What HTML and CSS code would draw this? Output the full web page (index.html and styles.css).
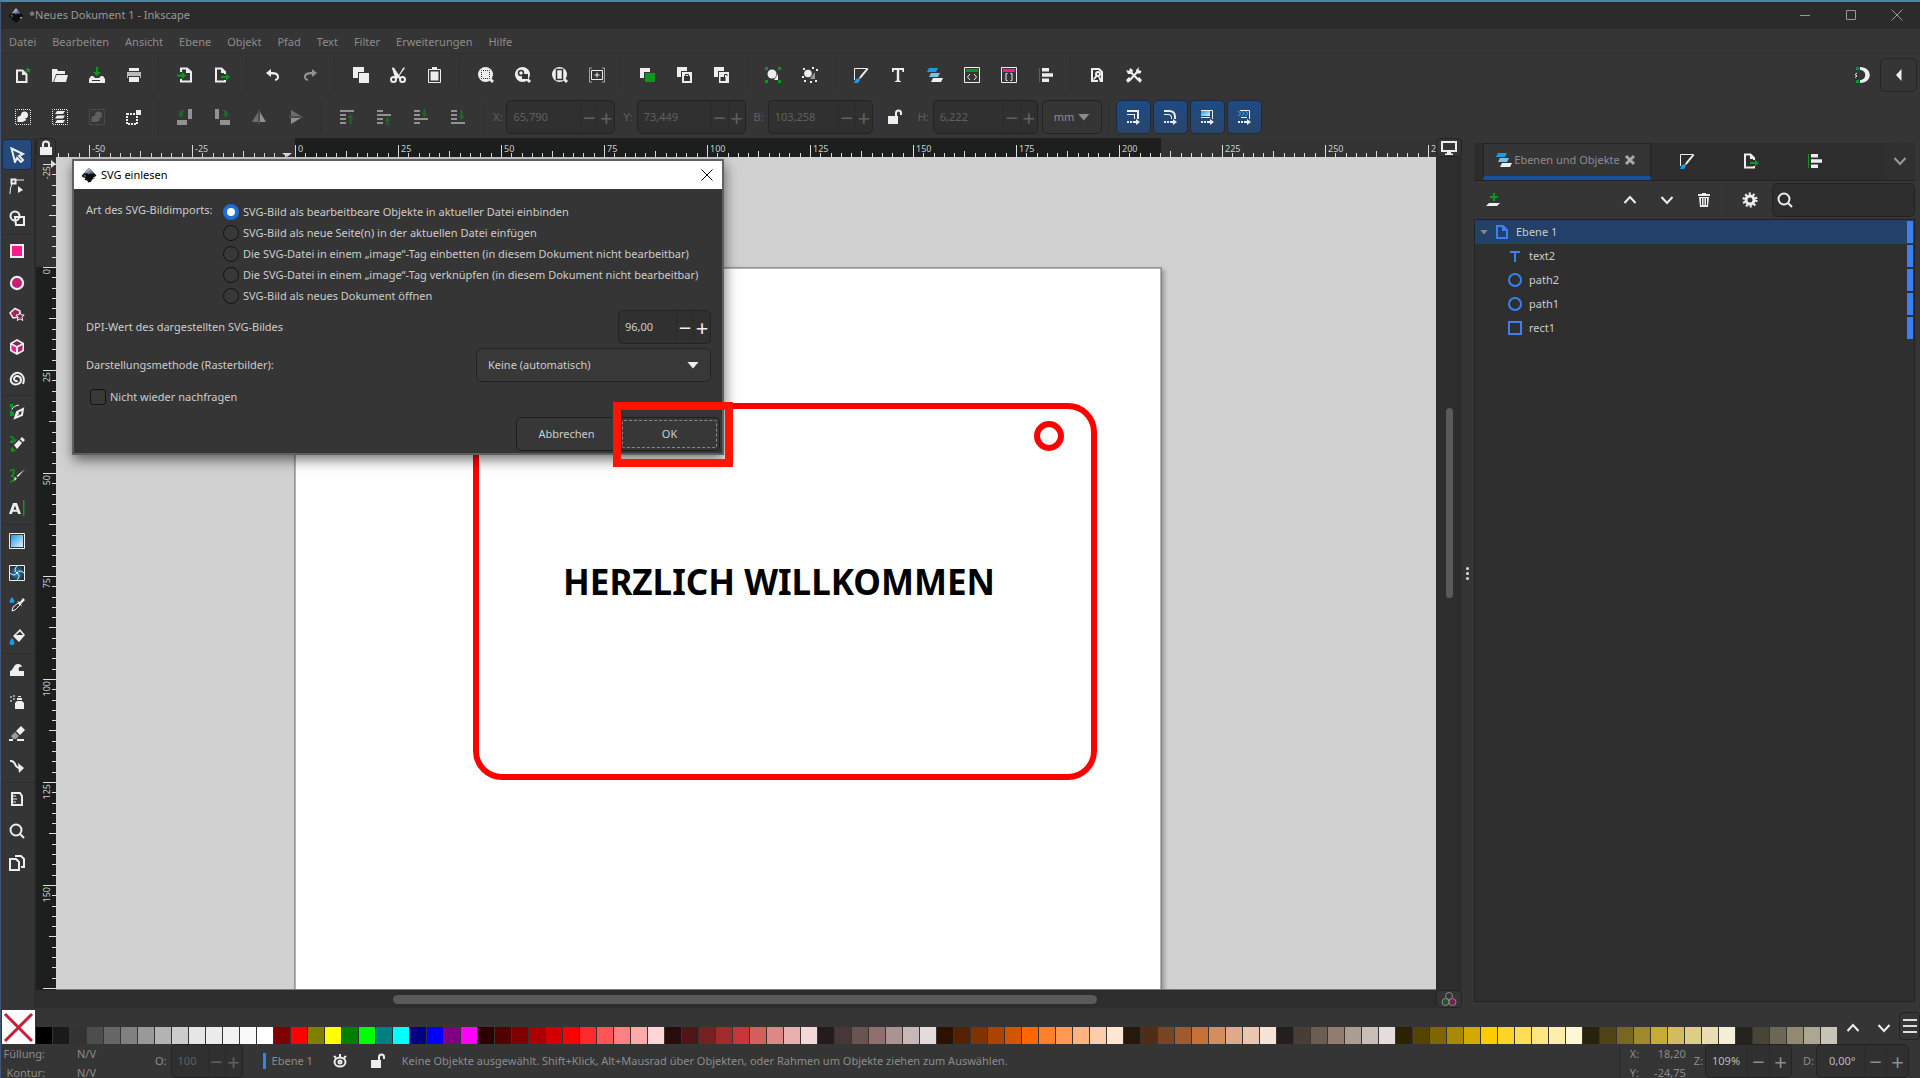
FILE: index.html
```html
<!DOCTYPE html>
<html lang="de">
<head>
<meta charset="utf-8">
<title>*Neues Dokument 1 - Inkscape</title>
<link rel="stylesheet" href="styles.css">
</head>
<body>
<svg class="sprite" aria-hidden="true">
  <defs>
    <linearGradient id="sky" x1="0" y1="0" x2="1" y2="1"><stop offset="0" stop-color="#1a9be6"/><stop offset="1" stop-color="#e4f3fb"/></linearGradient>
    <radialGradient id="glow"><stop offset="0" stop-color="#1a9be6"/><stop offset="1" stop-color="#2c3236"/></radialGradient>
    <linearGradient id="peak" x1="0" y1="0" x2="1" y2="1"><stop offset="0" stop-color="#fff"/><stop offset=".5" stop-color="#8797ad"/><stop offset="1" stop-color="#1c2b45"/></linearGradient>
  </defs>
  <symbol id="logo" viewBox="0 0 16 16"><path fill="#0d0d10" d="M8 1l7 7c1 1.200-1 1.800-2.500 2l1 1.500-2 .8L9.500 15l-2 .6L6 13.500l-2.500-.8 1-1.700C2 10.300 0 9.500 1.200 8z"/><path fill="url(#peak)" d="M8 1l5 5.500-2 .7-1.500-1L8 7.500 6 6 3 7z"/><path fill="#9aa4b4" d="M2 8.500h2.500l1 .7-2 .3zM12 10h2v1.500h-2z"/></symbol>
  <symbol id="new" viewBox="0 0 16 16"><path class="l2" d="M2 3.500h5.500l4 4V15H2z"/><path class="f" d="M7 4v4h5z"/><path class="g" d="M13 0l.9 2H16l-1.500 1.500.7 2.200L13 4.500l-2.200 1.200.7-2.200L10 2h2.100z"/></symbol>
  <symbol id="open" viewBox="0 0 16 16"><path class="f" d="M0 2h5l1 2h7v3H4l-2 6-1 2H0zM4.500 8H16l-2 7H2z"/></symbol>
  <symbol id="save" viewBox="0 0 16 16"><path class="g" d="M7 0h2v5h3L8 9 4 5h3z"/><path class="f" d="M2 9h2l2 2h4l2-2h2l2 3v4H0v-4z"/><path class="d" d="M3 13h8v1H3z"/></symbol>
  <symbol id="print" viewBox="0 0 16 16"><path class="f" d="M3 1h10v3H3zM3 10h10v5H3z"/><path fill="#bbb" d="M1 5h14v6h-1V9H2v2H1z"/></symbol>
  <symbol id="import" viewBox="0 0 16 16"><path class="l2" d="M4 5V1.500h6l4 3.500v9.500H4V12"/><path class="f" d="M9 1v5h5z"/><path class="g" d="M0 7.500h5V5l4 3.500L5 12V9.500H0z"/></symbol>
  <symbol id="export" viewBox="0 0 16 16"><path class="l2" d="M11 7V5L7.500 1.500H2v13h9V13"/><path class="f" d="M7 1v5h5z"/><path class="g" d="M7 9h5V6.500l4 3.500-4 3.500V11H7z"/></symbol>
  <symbol id="undo" viewBox="0 0 16 16"><path class="f" d="M1 6l5-4v3c5 0 8 1 8 5 0 2-1 3-4 4v-2c2-.5 2-1 2-2 0-2-2-2.700-6-2.700V10z"/></symbol>
  <symbol id="copy" viewBox="0 0 16 16"><path class="f" d="M0 0h11v5H5v6H0zM6 6h10v10H6z"/></symbol>
  <symbol id="cut" viewBox="0 0 16 16"><path class="f" d="M2 1c1-1 2 0 2 0l4.500 7.500L13 1s1-1 2 0L7 12l-2-1z"/><path class="f" d="M2 1l7 11 2-1L4 1z"/><circle class="l2" cx="3.500" cy="12.500" r="2.500"/><circle class="l2" cx="12.500" cy="12.500" r="2.500"/></symbol>
  <symbol id="paste" viewBox="0 0 16 16"><path class="l" d="M1.500 2.500h12v13h-12z"/><path class="f" d="M3.500 4.500h8v9h-8zM5 0h5v3H5z"/></symbol>
  <symbol id="zoomsel" viewBox="0 0 16 16"><circle class="f" cx="7.500" cy="7.500" r="7.500"/><path class="f" d="M11 13l2-2 3 3-2 2z"/><path d="M3.500 3.500h8v8h-8z" fill="none" stroke="#333" stroke-dasharray="1 1" stroke-dashoffset=".5"/></symbol>
  <symbol id="zoomdraw" viewBox="0 0 16 16"><circle class="f" cx="7.500" cy="7.500" r="7.500"/><path class="f" d="M11 13l2-2 3 3-2 2z"/><circle cx="6" cy="6" r="2.500" fill="none" stroke="#333" stroke-width="1.500"/><path class="d" d="M7 7h6v5H7z"/></symbol>
  <symbol id="zoompage" viewBox="0 0 16 16"><circle class="f" cx="7.500" cy="7.500" r="7.500"/><path class="f" d="M11 13l2-2 3 3-2 2z"/><path d="M4.500 2.500h6v10h-6z" fill="none" stroke="#333" stroke-width="1.500"/></symbol>
  <symbol id="zoomcenter" viewBox="0 0 16 16"><path class="l" d="M2.500 3.500h11v9h-11zM8 5.500v5M5.500 8h5"/><path class="l" opacity=".6" d="M3 1H.5v14H3M13 1h2.500v14H13"/></symbol>
  <symbol id="dup" viewBox="0 0 16 16"><path class="f" d="M0 1h10v4H4v6H0z"/><path class="g" d="M5 6h10v9H5z"/></symbol>
  <symbol id="clone" viewBox="0 0 16 16"><path class="f" d="M0 0h10v4H4v6H0zM5 5h10v11H5z"/><path class="d" d="M7 9h6v5H7z"/><path d="M8.500 9V7.500h3V9" fill="none" stroke="#333"/></symbol>
  <symbol id="unclone" viewBox="0 0 16 16"><path class="f" d="M0 0h10v4H4v6H0zM5 5h10v11H5z"/><path class="d" d="M6.500 10h5v4h-5z"/><path d="M10.500 10V7.500h2.500V9" fill="none" stroke="#333"/></symbol>
  <symbol id="group" viewBox="0 0 16 16"><circle class="f" cx="7" cy="7" r="4.500"/><path class="f" d="M9 13l4-6v6z"/><path class="g" d="M0 0h3v3H0zM13 0h3v3h-3zM0 13h3v3H0zM13 13h3v3h-3z"/></symbol>
  <symbol id="ungroup" viewBox="0 0 16 16"><circle class="f" cx="6" cy="6.500" r="3.800"/><path class="h" d="M8 12l5-7v7z"/><path class="f" d="M1 1h2v2H1zM10 0h2v2h-2zM14 2h2v2h-2zM0 9h2v2H0zM2 13h2v2H2zM8 14h2v2H8zM13 13h2v2h-2z"/></symbol>
  <symbol id="fill" viewBox="0 0 16 16"><path class="l" d="M1.500 13V1.500H14"/><path class="f" d="M15.500 2L9 10l-2 2-1-1 2-3 6-7z"/><path class="b" d="M1 16l2-4 3-1 1 2-2 3z"/></symbol>
  <symbol id="tee" viewBox="0 0 16 16"><path class="f" d="M2 1h12v4h-1.500L12 3H9.200v10.500l1.800.7V15H5v-.8l1.800-.7V3H4l-.5 2H2z"/></symbol>
  <symbol id="layers" viewBox="0 0 16 16"><path class="b" d="M2 1h9l-2 4H0z"/><path fill="#79bfe8" d="M4 6h9l-2 4H2z"/><path class="f" d="M6 11h10l-2 4H4z"/></symbol>
  <symbol id="xml" viewBox="0 0 16 16"><path class="l" d="M.5.500h15v15H.5zM6 7L3.500 10 6 13M10 7l2.500 3L10 13"/><path class="g" d="M2 2h12v3H2z"/></symbol>
  <symbol id="css" viewBox="0 0 16 16"><path class="l" d="M.5.500h15v15H.5zM6.500 6.500H5v7h1.500M9.500 6.500H11v7H9.500"/><path class="p" d="M2 2h12v3H2z"/></symbol>
  <symbol id="align" viewBox="0 0 16 16"><path class="g" d="M1 1h1v14H1z"/><path class="f" d="M4 1h7v3.500H4zM4 6.200h11v3.500H4zM4 11.500h7V15H4z"/></symbol>
  <symbol id="docprops" viewBox="0 0 16 16"><path class="l2" d="M9 14H3V2h7l3 3v9h-2"/><circle class="l2" cx="9" cy="7" r="2"/><path class="f" d="M4 12l3-4 2 1-4 4zM9 9l2 1 3 5h-3z"/></symbol>
  <symbol id="prefs" viewBox="0 0 16 16"><path class="l2" d="M3 14L12.500 3.500M3.500 4l9.500 9.500"/><path class="f" d="M0 3l3 1 1-3 3 2-1 4-4 0zM10 3l3-3-.5 3 3 1-1 2.500-4 0zM0 13l3-3 2 2-3 4zM11 12l2-2 3 3-2 3z"/></symbol>
  <symbol id="snap" viewBox="0 0 16 16"><path class="f" d="M6 0c13 0 13 16 0 16v-3c7 0 7-10 0-10z"/><path class="g" d="M2 0h3v3H2zM2 13h3v3H2z"/><path class="l" d="M3 6L1 7.500 3 9 1 10.500"/></symbol>
  <symbol id="left" viewBox="0 0 16 16"><path class="f" d="M10.500 2v12L5 8z"/></symbol>
  <symbol id="selall" viewBox="0 0 16 16"><path class="l dot" d="M.5.500h15v15H.5z"/><circle class="f" cx="9.500" cy="6" r="3.500"/><path class="f" d="M2.500 13V8l4-2 5 5-4 2z"/></symbol>
  <symbol id="sellayers" viewBox="0 0 16 16"><path class="l dot" d="M.5.500h15v15H.5z"/><path class="f" d="M5 2h8l-2 3H3zM5 6.500h8l-2 3H3zM5 11h8l-2 3H3z"/></symbol>
  <symbol id="deselect" viewBox="0 0 16 16"><path class="l dot2" d="M1 5h10v10H1z"/><path class="f" d="M10 1h5v5h-5z"/></symbol>
  <symbol id="rotl" viewBox="0 0 16 16"><path class="g" d="M1 5l3 4 3-4H5.500c0-2 1-3 2.500-4C4 0 2.500 2 2.500 5z"/><path class="f" d="M11 0h4v10h-4zM0 11h10v5H0z"/></symbol>
  <symbol id="rotr" viewBox="0 0 16 16"><path class="g" d="M9 5l3 4 3-4h-1.500c0-3-2-5-6-4 2 0 3 2 3 4z"/><path class="f" d="M1 0h4v10H1zM6 11h10v5H6z"/></symbol>
  <symbol id="fliph" viewBox="0 0 16 16"><path class="f" opacity=".6" d="M7 3v10H1z"/><path class="f" d="M9 3v10h6z"/><path class="l dot" d="M8 1v14"/></symbol>
  <symbol id="flipv" viewBox="0 0 16 16"><path class="f" opacity=".6" d="M3 1v6h10z"/><path class="f" d="M3 15V9h10z"/><path class="l dot" d="M1 8h14"/></symbol>
  <symbol id="top" viewBox="0 0 16 16"><path class="f" d="M1 1h14v2H1zM1 5h6v2H1zM1 9h6v2H1zM1 13h6v2H1z"/><path class="g" d="M10.500 15V9H8.500L11.500 5l3 4h-2v6z"/></symbol>
  <symbol id="raise" viewBox="0 0 16 16"><path class="f" d="M1 1h6v2H1zM1 5h14v2H1zM1 9h6v2H1zM1 13h6v2H1z"/><path class="g" d="M10.500 16v-4h-2l3-4 3 4h-2v4z"/></symbol>
  <symbol id="lower" viewBox="0 0 16 16"><path class="f" d="M1 1h6v2H1zM1 5h6v2H1zM1 9h14v2H1zM1 13h6v2H1z"/><path class="g" d="M10.500 0v4h-2l3 4 3-4h-2V0z"/></symbol>
  <symbol id="bottom" viewBox="0 0 16 16"><path class="f" d="M1 1h6v2H1zM1 5h6v2H1zM1 9h6v2H1zM1 13h14v2H1z"/><path class="g" d="M10.500 1v6h-2l3 4 3-4h-2V1z"/></symbol>
  <symbol id="lock" viewBox="0 0 16 16"><path class="f" d="M2 7h12v8H2z"/><path class="l2" d="M5 7V4c0-3.500 6-3.500 6 0v3"/></symbol>
  <symbol id="unlock" viewBox="0 0 16 16"><path class="f" d="M1 7h10v8H1z"/><path class="l2" d="M9 7V4c0-3.500 5-3.500 5 0v2"/></symbol>
  <symbol id="mstroke" viewBox="0 0 16 16"><path class="f" d="M2 1h12v9h-2V3H2zM2 5h8v5H9V6H2zM2 12h2v2H2zM5 12h2v2H5zM8 12h3v-2l4 3-4 3v-2H8z"/></symbol>
  <symbol id="mcorner" viewBox="0 0 16 16"><path class="f" d="M2 1h5q7 0 7 7v2h-2V8q0-5-5-5H2zM2 5h4q4 0 4 4v1H9V9q0-3-3-3H2zM2 12h2v2H2zM5 12h2v2H5zM8 12h3v-2l4 3-4 3v-2H8z"/></symbol>
  <symbol id="mgrad" viewBox="0 0 16 16"><path fill="url(#sky)" d="M2 2h9v5H2z"/><path class="l" d="M2 1.500h11.500V10M2 8.500h9"/><path class="f" d="M2 12h2v2H2zM5 12h2v2H5zM8 12h3v-2l4 3-4 3v-2H8z"/></symbol>
  <symbol id="mpat" viewBox="0 0 16 16"><path d="M2 2l3 2.500L2 7M5.500 2l3 2.500-3 2.500M9 2l3 2.500L9 7" fill="none" stroke="#3bb0f2"/><path class="l" d="M4 1.500h9.500V10M5 8.500h6"/><path class="f" d="M2 12h2v2H2zM5 12h2v2H5zM8 12h3v-2l4 3-4 3v-2H8z"/></symbol>
  <symbol id="arrow" viewBox="0 0 16 16"><path class="l2" d="M2.500 1.500L14 7l-4 2 4 4-2 2-4-4-2 4z"/></symbol>
  <symbol id="node" viewBox="0 0 16 16"><path class="l" d="M1 16q0-7 2-10M7 2h8"/><path class="l2" d="M2.500 1.500h4v4h-4z"/><path class="f" d="M9 8l5 4-5 3z"/></symbol>
  <symbol id="shapes" viewBox="0 0 16 16"><circle class="l2" cx="6" cy="6" r="4.500"/><path class="l2" d="M6 7h9v8H7z"/></symbol>
  <symbol id="rect" viewBox="0 0 16 16"><path class="f" d="M1 1h14v14H1z"/><path class="p" d="M3 3h10v10H3z"/></symbol>
  <symbol id="circle" viewBox="0 0 16 16"><circle class="f" cx="8" cy="8" r="7.200"/><circle cx="8" cy="8" r="5" fill="#c71f73"/></symbol>
  <symbol id="star" viewBox="0 0 16 16"><path d="M6 1.500l5 2.500-1 6-6 1-3-5z" fill="#a3265f" stroke="#eee" stroke-width="1.500"/><path d="M11 5l1.200 2.800 3 .2-2.200 2.200.8 3.300-2.800-1.700-2.800 1.700.8-3.300L7 8l3-.2z" fill="#7a2a52" stroke="#eee"/></symbol>
  <symbol id="box" viewBox="0 0 16 16"><path class="f" d="M8 0l7 4v8l-7 4-7-4V4z"/><path d="M8 2l4.500 2.500L8 7 3.500 4.500z" fill="#7a2a52"/><path class="p" d="M2.500 6L7 8.500v5L2.500 11z"/><path d="M13.500 6L9 8.500v5l4.500-2.500z" fill="#b5226c"/></symbol>
  <symbol id="spiral" viewBox="0 0 16 16"><path class="l2" d="M14 13C17 5 11 1 7 2S0 9 3 12s9 1 9-3-5-5-6.500-2.500S7 11 8.500 9.500"/></symbol>
  <symbol id="pen" viewBox="0 0 16 16"><path class="l" d="M2 8Q3 2 10 1"/><path class="g" d="M1 0h3v3H1zM1 8h4v4H1zM2 3h1v5H2z"/><path class="l2" d="M6 14l2-6 6-3-1 6z"/><path class="f" d="M6 14l4-4-1-3-3 4z"/></symbol>
  <symbol id="pencil" viewBox="0 0 16 16"><path d="M1 1q4-1 3 2T1 6q5 1 6-3M2 12l3 3" fill="none" stroke="#0a9a1a" stroke-width="1.500"/><path class="g" d="M3 11l4 4-5 1z"/><path class="f" d="M5 9l5-5 3 3-5 6zM11 3l2-2 3 3-2 2z"/></symbol>
  <symbol id="brush" viewBox="0 0 16 16"><path d="M1 3q5-3 4 1T2 8q5 0 2 5l-3 1" fill="none" stroke="#0a9a1a" stroke-width="1.500"/><path class="f" d="M16 1L9 9 7.500 8zM6 9l2 1.500L5 13z"/></symbol>
  <symbol id="textt" viewBox="0 0 16 16"><path class="f" fill-rule="evenodd" d="M4 3h4l4 11H9l-.7-2.200H3.700L3 14H0zM6 5.500L4.500 9.800h3z"/><path class="g" d="M14 0h1.500v16H14z"/></symbol>
  <symbol id="grad" viewBox="0 0 16 16"><path d="M.5.500h15v15H.5z" fill="none" stroke="#eee"/><path fill="url(#sky)" d="M2 2h12v12H2z"/></symbol>
  <symbol id="mesh" viewBox="0 0 16 16"><path d="M.5.500h15v15H.5z" fill="url(#glow)" stroke="#eee"/><path class="l" d="M8 8Q4 5 8 1M8 8q4 3 0 7M8 8q-3 4-7 0M8 8q3-4 7 0"/></symbol>
  <symbol id="dropper" viewBox="0 0 16 16"><path class="b" d="M3 0c4 5 2.500 6 0 6S-1 5 3 0z"/><path class="l" d="M3 14l1-4 5-4 2 2-5 5z"/><path class="f" d="M8 4l3 1 3-4 2 2-4 4 1 3z"/></symbol>
  <symbol id="bucket" viewBox="0 0 16 16"><path class="f" fill-rule="evenodd" d="M4 7l7-7 5 6-6 7zM7 6h7l-3-3.500z"/><path class="b" d="M3 9c4 5 2.500 7 0 7S-1 14 3 9z"/></symbol>
  <symbol id="tweak" viewBox="0 0 16 16"><path class="f" d="M1 14V9c4-1 3-7 8-7 3 0 4 2 4 3-3-1-4 1-3 4h5v5z"/></symbol>
  <symbol id="spray" viewBox="0 0 16 16"><path class="f" d="M6 9l2-2h5l2 2v6H6zM8 4h5v2H8zM9 2h3v1H9z"/><path class="h" d="M1 2h2v2H1zM4 4h2v2H4zM1 6h2v2H1zM4 1h2v2H4z"/></symbol>
  <symbol id="eraser" viewBox="0 0 16 16"><path class="f" d="M7 5l5-5 4 4-5 5zM0 13h4v2H0zM8 13h7v2H8z"/><path class="h" d="M2 10l4-4 4 4-3 3H4z"/></symbol>
  <symbol id="connector" viewBox="0 0 16 16"><path class="l2" d="M1 3c7-1 3 7 10 7"/><path class="f" d="M9 5l6 5-5 5z"/></symbol>
  <symbol id="measure" viewBox="0 0 16 16"><path class="l2" d="M3 2h8l2 3v9H3z"/><path class="l" d="M3 5h4M3 8h5M3 11h4"/></symbol>
  <symbol id="lens" viewBox="0 0 16 16"><circle class="l2" cx="7" cy="7" r="5.500"/><path class="l2" d="M11 11l4 4"/></symbol>
  <symbol id="pages" viewBox="0 0 16 16"><path class="l2" d="M1 4h6l3 3v8H1zM6 1h6l3 3v8h-3"/></symbol>
  <symbol id="screen" viewBox="0 0 16 16"><path class="l2" d="M1 2h14v9H1z"/><path class="f" d="M6 12h4v1.500h2V15H4v-1.500h2z"/></symbol>
  <symbol id="cms" viewBox="0 0 16 16"><circle cx="8" cy="5" r="3.500" class="hl"/><circle cx="4.500" cy="11" r="3.500" fill="#1c5a26" stroke="#888"/><circle cx="11.500" cy="11" r="3.500" fill="#7d1e50" stroke="#888"/></symbol>
  <symbol id="addlayer" viewBox="0 0 16 16"><path class="g" d="M8 1h2v3h3v2h-3v3H8V6H5V4h3z"/><path class="f" d="M4 11h11l-3 3H1z"/></symbol>
  <symbol id="up" viewBox="0 0 16 16"><path class="l2" d="M2.500 11L8 5l5.500 6"/></symbol>
  <symbol id="down" viewBox="0 0 16 16"><path class="l2" d="M2.500 5L8 11l5.500-6"/></symbol>
  <symbol id="trash" viewBox="0 0 16 16"><path class="f" fill-rule="evenodd" d="M2 2h4V1h4v1h4v2H2zM3 5h10l-1 10H4zM5 6v7h1V6zM7.500 6v7h1V6zM10 6v7h1V6z"/></symbol>
  <symbol id="gear" viewBox="0 0 16 16"><circle cx="8" cy="8" r="4" fill="none" stroke="#eee" stroke-width="3"/><circle cx="8" cy="8" r="6.300" fill="none" stroke="#eee" stroke-width="2.500" stroke-dasharray="2 1.960"/></symbol>
  <symbol id="page" viewBox="0 0 16 16"><path class="l2" d="M3 2h6l4 4v8H3zM9 2v4h4"/></symbol>
  <symbol id="ring" viewBox="0 0 16 16"><circle class="l2" cx="8" cy="8" r="6"/></symbol>
  <symbol id="square" viewBox="0 0 16 16"><path class="l2" d="M2 2h12v12H2z"/></symbol>
  <symbol id="teeplain" viewBox="0 0 16 16"><path class="f" d="M3 3h10v2H9v9H7V5H3z"/></symbol>
  <symbol id="eye" viewBox="0 0 16 16"><ellipse class="l2" cx="8" cy="9" rx="5.500" ry="4.500"/><circle class="l2" cx="8" cy="9" r="1.500"/><path class="l2" d="M2 3l2 2M8 1v3M14 3l-2 2"/></symbol>
  <symbol id="cross" viewBox="0 0 16 16"><path class="l" d="M2.500 2.500l11 11M13.500 2.500l-11 11"/></symbol>
  <symbol id="tabx" viewBox="0 0 16 16"><path d="M4 4l8 8M12 4l-8 8" stroke="#aaa" stroke-width="3"/></symbol>
  <symbol id="min" viewBox="0 0 16 16"><path class="l" d="M3 8.500h10"/></symbol>
  <symbol id="max" viewBox="0 0 16 16"><path class="l" d="M3.500 3.500h9v9h-9z"/></symbol>
</svg>

<div class="app">
  <header class="titlebar">
    <svg class="icon"><use href="#logo"/></svg>
    <h1 class="title">*Neues Dokument 1 - Inkscape</h1>
    <div class="window-buttons">
      <button aria-label="Minimieren"><svg class="icon"><use href="#min"/></svg></button>
      <button aria-label="Maximieren"><svg class="icon"><use href="#max"/></svg></button>
      <button aria-label="Schließen"><svg class="icon"><use href="#cross"/></svg></button>
    </div>
  </header>

  <nav class="menubar">
    <a href="#">Datei</a><a href="#">Bearbeiten</a><a href="#">Ansicht</a><a href="#">Ebene</a><a href="#">Objekt</a><a href="#">Pfad</a><a href="#">Text</a><a href="#">Filter</a><a href="#">Erweiterungen</a><a href="#">Hilfe</a>
  </nav>

  <div class="toolbar">
    <button class="tool" aria-label="Neu"><svg class="icon"><use href="#new"/></svg></button>
    <button class="tool" aria-label="Öffnen"><svg class="icon"><use href="#open"/></svg></button>
    <button class="tool" aria-label="Speichern"><svg class="icon"><use href="#save"/></svg></button>
    <button class="tool" aria-label="Drucken"><svg class="icon"><use href="#print"/></svg></button>
    <span class="sep"></span>
    <button class="tool" aria-label="Importieren"><svg class="icon"><use href="#import"/></svg></button>
    <button class="tool" aria-label="Exportieren"><svg class="icon"><use href="#export"/></svg></button>
    <span class="sep"></span>
    <button class="tool" aria-label="Rückgängig"><svg class="icon"><use href="#undo"/></svg></button>
    <button class="tool dim" aria-label="Wiederherstellen"><svg class="icon mirrored"><use href="#undo"/></svg></button>
    <span class="sep"></span>
    <button class="tool" aria-label="Kopieren"><svg class="icon"><use href="#copy"/></svg></button>
    <button class="tool" aria-label="Ausschneiden"><svg class="icon"><use href="#cut"/></svg></button>
    <button class="tool" aria-label="Einfügen"><svg class="icon"><use href="#paste"/></svg></button>
    <span class="sep"></span>
    <button class="tool" aria-label="Auswahl zoomen"><svg class="icon"><use href="#zoomsel"/></svg></button>
    <button class="tool" aria-label="Zeichnung zoomen"><svg class="icon"><use href="#zoomdraw"/></svg></button>
    <button class="tool" aria-label="Seite zoomen"><svg class="icon"><use href="#zoompage"/></svg></button>
    <button class="tool" aria-label="Seite zentrieren"><svg class="icon"><use href="#zoomcenter"/></svg></button>
    <span class="sep"></span>
    <button class="tool" aria-label="Duplizieren"><svg class="icon"><use href="#dup"/></svg></button>
    <button class="tool" aria-label="Klonen"><svg class="icon"><use href="#clone"/></svg></button>
    <button class="tool" aria-label="Klon trennen"><svg class="icon"><use href="#unclone"/></svg></button>
    <span class="sep"></span>
    <button class="tool" aria-label="Gruppieren"><svg class="icon"><use href="#group"/></svg></button>
    <button class="tool" aria-label="Gruppierung aufheben"><svg class="icon"><use href="#ungroup"/></svg></button>
    <span class="sep"></span>
    <button class="tool" aria-label="Füllung und Kontur"><svg class="icon"><use href="#fill"/></svg></button>
    <button class="tool" aria-label="Text und Schriftart"><svg class="icon"><use href="#tee"/></svg></button>
    <button class="tool" aria-label="Ebenen"><svg class="icon"><use href="#layers"/></svg></button>
    <button class="tool" aria-label="XML-Editor"><svg class="icon"><use href="#xml"/></svg></button>
    <button class="tool" aria-label="Selektoren und CSS"><svg class="icon"><use href="#css"/></svg></button>
    <button class="tool" aria-label="Ausrichten"><svg class="icon"><use href="#align"/></svg></button>
    <span class="sep"></span>
    <button class="tool" aria-label="Dokumenteigenschaften"><svg class="icon"><use href="#docprops"/></svg></button>
    <button class="tool" aria-label="Einstellungen"><svg class="icon"><use href="#prefs"/></svg></button>
    <span class="spacer"></span>
    <button class="tool" aria-label="Einrasten"><svg class="icon"><use href="#snap"/></svg></button>
    <button class="tool framed" aria-label="Einrastoptionen"><svg class="icon"><use href="#left"/></svg></button>
  </div>

  <div class="toolbar">
    <button class="tool" aria-label="Alles auswählen"><svg class="icon"><use href="#selall"/></svg></button>
    <button class="tool" aria-label="In allen Ebenen auswählen"><svg class="icon"><use href="#sellayers"/></svg></button>
    <button class="tool off" aria-label="Auswahl aufheben"><svg class="icon"><use href="#selall"/></svg></button>
    <button class="tool" aria-label="Auswahlrahmen"><svg class="icon"><use href="#deselect"/></svg></button>
    <span class="sep"></span>
    <button class="tool dim" aria-label="Nach links drehen"><svg class="icon"><use href="#rotl"/></svg></button>
    <button class="tool dim" aria-label="Nach rechts drehen"><svg class="icon"><use href="#rotr"/></svg></button>
    <button class="tool dim" aria-label="Horizontal umkehren"><svg class="icon"><use href="#fliph"/></svg></button>
    <button class="tool dim" aria-label="Vertikal umkehren"><svg class="icon"><use href="#flipv"/></svg></button>
    <span class="sep"></span>
    <button class="tool dim" aria-label="Ganz nach oben"><svg class="icon"><use href="#top"/></svg></button>
    <button class="tool dim" aria-label="Anheben"><svg class="icon"><use href="#raise"/></svg></button>
    <button class="tool dim" aria-label="Absenken"><svg class="icon"><use href="#lower"/></svg></button>
    <button class="tool dim" aria-label="Ganz nach unten"><svg class="icon"><use href="#bottom"/></svg></button>
    <span class="sep"></span>
    <div class="field off-field"><label for="fx">X:</label><span class="spin"><input id="fx" value="65,790" disabled><button disabled>−</button><button disabled>+</button></span></div>
    <div class="field off-field"><label for="fy">Y:</label><span class="spin"><input id="fy" value="73,449" disabled><button disabled>−</button><button disabled>+</button></span></div>
    <div class="field off-field"><label for="fb">B:</label><span class="spin size"><input id="fb" value="103,258" disabled><button disabled>−</button><button disabled>+</button></span></div>
    <button class="tool" aria-label="Seitenverhältnis sperren"><svg class="icon"><use href="#unlock"/></svg></button>
    <div class="field off-field"><label for="fh">H:</label><span class="spin size"><input id="fh" value="6,222" disabled><button disabled>−</button><button disabled>+</button></span></div>
    <span class="select unit"><select aria-label="Einheit"><option>mm</option></select></span>
    <span class="sep"></span>
    <div class="toggles">
      <button class="toggle" aria-label="Konturbreite skalieren"><svg class="icon"><use href="#mstroke"/></svg></button>
      <button class="toggle" aria-label="Ecken skalieren"><svg class="icon"><use href="#mcorner"/></svg></button>
      <button class="toggle" aria-label="Farbverläufe verschieben"><svg class="icon"><use href="#mgrad"/></svg></button>
      <button class="toggle" aria-label="Muster verschieben"><svg class="icon"><use href="#mpat"/></svg></button>
    </div>
  </div>

  <main class="workspace">
    <aside class="toolbox">
      <button class="active" aria-label="Auswahl"><svg class="icon"><use href="#arrow"/></svg></button>
      <button aria-label="Knoten"><svg class="icon"><use href="#node"/></svg></button>
      <button aria-label="Formen"><svg class="icon"><use href="#shapes"/></svg></button>
      <hr>
      <button aria-label="Rechteck"><svg class="icon"><use href="#rect"/></svg></button>
      <button aria-label="Ellipse"><svg class="icon"><use href="#circle"/></svg></button>
      <button aria-label="Stern"><svg class="icon"><use href="#star"/></svg></button>
      <button aria-label="Quader"><svg class="icon"><use href="#box"/></svg></button>
      <button aria-label="Spirale"><svg class="icon"><use href="#spiral"/></svg></button>
      <hr>
      <button aria-label="Füller"><svg class="icon"><use href="#pen"/></svg></button>
      <button aria-label="Freihand"><svg class="icon"><use href="#pencil"/></svg></button>
      <button aria-label="Kalligrafie"><svg class="icon"><use href="#brush"/></svg></button>
      <button aria-label="Text"><svg class="icon"><use href="#textt"/></svg></button>
      <hr>
      <button aria-label="Farbverlauf"><svg class="icon"><use href="#grad"/></svg></button>
      <button aria-label="Gitter"><svg class="icon"><use href="#mesh"/></svg></button>
      <button aria-label="Farbpipette"><svg class="icon"><use href="#dropper"/></svg></button>
      <button aria-label="Farbeimer"><svg class="icon"><use href="#bucket"/></svg></button>
      <hr>
      <button aria-label="Modellieren"><svg class="icon"><use href="#tweak"/></svg></button>
      <button aria-label="Spray"><svg class="icon"><use href="#spray"/></svg></button>
      <button aria-label="Radierer"><svg class="icon"><use href="#eraser"/></svg></button>
      <button aria-label="Verbinder"><svg class="icon"><use href="#connector"/></svg></button>
      <hr>
      <button aria-label="Messen"><svg class="icon"><use href="#measure"/></svg></button>
      <button aria-label="Zoom"><svg class="icon"><use href="#lens"/></svg></button>
      <button aria-label="Seiten"><svg class="icon"><use href="#pages"/></svg></button>
    </aside>

    <section class="editor">
      <button class="corner" aria-label="Führungslinien sperren"><svg class="icon"><use href="#lock"/></svg></button>
      <svg class="ruler">
        <defs><pattern id="hticks" patternUnits="userSpaceOnUse" x="239" width="103" height="19"><path stroke="#ddd" d="M.5 7v12M51.500 13v6M10.500 15v4M21.500 15v4M31.500 15v4M41.500 15v4M62.500 15v4M72.500 15v4M82.500 15v4M93.500 15v4"/></pattern></defs>
        <rect class="ruler-page" x="239" width="866" height="19"/>
        <rect width="100%" height="19" fill="url(#hticks)"/>
        <path d="M226 15h10l-5 4z" fill="#ddd"/>
        <text x="36" y="14">-50</text><text x="139" y="14">-25</text><text x="242" y="14">0</text><text x="345" y="14">25</text><text x="448" y="14">50</text><text x="551" y="14">75</text><text x="654" y="14">100</text><text x="757" y="14">125</text><text x="860" y="14">150</text><text x="963" y="14">175</text><text x="1066" y="14">200</text><text x="1169" y="14">225</text><text x="1272" y="14">250</text><text x="1375" y="14">275</text>
      </svg>
      <button class="corner" aria-label="Anzeigemodus"><svg class="icon"><use href="#screen"/></svg></button>

      <svg class="ruler">
        <defs><pattern id="vticks" patternUnits="userSpaceOnUse" y="110" width="20" height="103"><path stroke="#ddd" d="M7 .5h13M13 51.500h7M16 10.500h4M16 21.500h4M16 31.500h4M16 41.500h4M16 62.500h4M16 72.500h4M16 82.500h4M16 93.500h4"/></pattern></defs>
        <rect class="ruler-page" y="110" width="20" height="100%"/>
        <rect width="20" height="100%" fill="url(#vticks)"/>
        <path d="M15 3v8l5-4z" fill="#ddd"/>
        <g text-anchor="end"><text transform="translate(14 9) rotate(-90)">-25</text><text transform="translate(14 112) rotate(-90)">0</text><text transform="translate(14 215) rotate(-90)">25</text><text transform="translate(14 318) rotate(-90)">50</text><text transform="translate(14 421) rotate(-90)">75</text><text transform="translate(14 524) rotate(-90)">100</text><text transform="translate(14 627) rotate(-90)">125</text><text transform="translate(14 730) rotate(-90)">150</text></g>
      </svg>
      <svg class="canvas">
        <rect class="page" x="239" y="111" width="866" height="1224"/>
        <rect x="420" y="249" width="618" height="371" rx="26" fill="none" stroke="#f00" stroke-width="6"/>
        <circle cx="993" cy="279" r="12" fill="none" stroke="#f00" stroke-width="6"/>
        <text class="welcome" x="507" y="438">HERZLICH WILLKOMMEN</text>
      </svg>
      <div class="vscroll"><span class="thumb"></span></div>
      <div class="scroll-corner"></div>
      <div class="hscroll"><span class="thumb"></span></div>
      <button class="corner" aria-label="Farbmanagement"><svg class="icon"><use href="#cms"/></svg></button>

      <section class="dialog" role="dialog" aria-labelledby="dlg-title">
        <header class="dialog-title">
          <svg class="icon"><use href="#logo"/></svg>
          <h2 id="dlg-title">SVG einlesen</h2>
          <button aria-label="Schließen"><svg class="icon"><use href="#cross"/></svg></button>
        </header>
        <form class="dialog-body">
          <fieldset class="options">
            <legend>Art des SVG-Bildimports:</legend>
            <div class="choices">
              <label><input type="radio" name="mode" checked>SVG-Bild als bearbeitbeare Objekte in aktueller Datei einbinden</label>
              <label><input type="radio" name="mode">SVG-Bild als neue Seite(n) in der aktuellen Datei einfügen</label>
              <label><input type="radio" name="mode">Die SVG-Datei in einem „image“-Tag einbetten (in diesem Dokument nicht bearbeitbar)</label>
              <label><input type="radio" name="mode">Die SVG-Datei in einem „image“-Tag verknüpfen (in diesem Dokument nicht bearbeitbar)</label>
              <label><input type="radio" name="mode">SVG-Bild als neues Dokument öffnen</label>
            </div>
          </fieldset>
          <div class="row"><label for="dpi">DPI-Wert des dargestellten SVG-Bildes</label><span class="spin"><input id="dpi" value="96,00"><button type="button">−</button><button type="button">+</button></span></div>
          <div class="row"><label for="render">Darstellungsmethode (Rasterbilder):</label><span class="select wide"><select id="render"><option>Keine (automatisch)</option></select></span></div>
          <label class="check"><input type="checkbox">Nicht wieder nachfragen</label>
          <div class="actions"><button type="button">Abbrechen</button><button type="button" class="focused">OK</button></div>
        </form>
        <span class="marker"></span>
      </section>
    </section>

    <div class="splitter"><i></i><i></i><i></i></div>

    <aside class="panel">
      <div class="tabs">
        <button class="tab current"><svg class="icon"><use href="#layers"/></svg>Ebenen und Objekte<svg class="icon"><use href="#tabx"/></svg></button>
        <button class="tab" aria-label="Füllung und Kontur"><svg class="icon"><use href="#fill"/></svg></button>
        <button class="tab" aria-label="Exportieren"><svg class="icon"><use href="#export"/></svg></button>
        <button class="tab" aria-label="Ausrichten"><svg class="icon"><use href="#align"/></svg></button>
        <button class="tab more" aria-label="Weitere"><svg class="icon"><use href="#down"/></svg></button>
      </div>
      <div class="panel-tools">
        <button class="tool" aria-label="Ebene hinzufügen"><svg class="icon"><use href="#addlayer"/></svg></button>
        <span class="spacer"></span>
        <button class="tool" aria-label="Nach oben"><svg class="icon"><use href="#up"/></svg></button>
        <button class="tool" aria-label="Nach unten"><svg class="icon"><use href="#down"/></svg></button>
        <button class="tool" aria-label="Löschen"><svg class="icon"><use href="#trash"/></svg></button>
        <span class="sep"></span>
        <button class="tool" aria-label="Optionen"><svg class="icon"><use href="#gear"/></svg></button>
        <label class="search"><svg class="icon"><use href="#lens"/></svg><input type="search" aria-label="Suchen"></label>
      </div>
      <ul class="tree">
        <li class="layer selected"><span class="twist"></span><svg class="icon"><use href="#page"/></svg>Ebene 1</li>
        <li><svg class="icon"><use href="#teeplain"/></svg>text2</li>
        <li><svg class="icon"><use href="#ring"/></svg>path2</li>
        <li><svg class="icon"><use href="#ring"/></svg>path1</li>
        <li><svg class="icon"><use href="#square"/></svg>rect1</li>
      </ul>
    </aside>
  </main>

  <div class="palette">
    <button class="none" aria-label="Keine Farbe"><svg viewBox="0 0 33 33"><path d="M3 3l27 27M30 3L3 30" stroke="#c3203a" stroke-width="3"/></svg></button>
    <div class="swatches" id="swatches"></div>
    <div class="palette-nav">
      <button aria-label="Zurück"><svg class="icon"><use href="#up"/></svg></button>
      <button aria-label="Weiter"><svg class="icon"><use href="#down"/></svg></button>
      <button class="burger" aria-label="Palette wählen"><i></i><i></i><i></i></button>
    </div>
  </div>

  <footer class="status">
    <dl class="paint"><dt>Füllung:</dt><dd>N/V</dd><dt>Kontur:</dt><dd>N/V</dd></dl>
    <div class="field off-field opacity"><label for="op">O:</label><span class="spin"><input id="op" value="100" disabled><button disabled>−</button><button disabled>+</button></span></div>
    <span class="layer-name">Ebene 1</span>
    <button class="tool" aria-label="Sichtbarkeit"><svg class="icon"><use href="#eye"/></svg></button>
    <button class="tool" aria-label="Ebene sperren"><svg class="icon"><use href="#unlock"/></svg></button>
    <p class="message">Keine Objekte ausgewählt. Shift+Klick, Alt+Mausrad über Objekten, oder Rahmen um Objekte ziehen zum Auswählen.</p>
    <dl class="coords"><dt>X:</dt><dd>18,20</dd><dt>Y:</dt><dd>-24,75</dd></dl>
    <div class="field zoom"><label for="zm">Z:</label><span class="spin"><input id="zm" value="109%"><button>−</button><button>+</button></span></div>
    <div class="field turn"><label for="rt">D:</label><span class="spin"><input id="rt" value="0,00°"><button>−</button><button>+</button></span></div>
  </footer>
</div>
<script src="script.js"></script>
</body>
</html>
```
FILE: styles.css
```css
* { box-sizing: border-box; }

body {
  margin: 0;
  background: #353535;
  color: #ccc;
  font: 11px/16px "Noto Sans", "Open Sans", sans-serif;
}

button, input, select {
  margin: 0;
  padding: 0;
  border: 0;
  background: none;
  color: inherit;
  font: inherit;
}
input, select { min-width: 0; outline: 0; }
h1, h2, p, ul, dl, dd, fieldset { margin: 0; padding: 0; border: 0; font: inherit; }
a { color: inherit; text-decoration: none; }

.sprite { position: absolute; width: 0; height: 0; }
.icon { width: 16px; height: 16px; flex: none; display: block; color: #eee; }
.mirrored { transform: scaleX(-1); }
.f { fill: currentColor; }
.g { fill: #0a9a1a; }
.b { fill: #1a9be6; }
.p { fill: #ff1a8c; }
.h { fill: #999; }
.d { fill: #333; }
.l, .l2 { fill: none; stroke: currentColor; stroke-width: 1; }
.l2 { stroke-width: 2; }
.hl { fill: none; stroke: #888; }
.dot { stroke-dasharray: 1 1; stroke-dashoffset: .5; }
.dot2 { stroke-width: 2; stroke-dasharray: 2 1; }

.app {
  display: flex;
  flex-direction: column;
  height: 100vh;
  overflow: hidden;
  border-top: 2px solid #4487b0;
  border-left: 1px solid #3d5878;
}

.titlebar {
  display: flex;
  align-items: center;
  gap: 5px;
  height: 27px;
  padding: 0 0 2px 7px;
  background: #2b2b2b;
  color: #999;
}
.title { flex: 1; }
.window-buttons { display: flex; }
.window-buttons button { width: 46px; height: 25px; display: grid; place-items: center; }
.window-buttons .icon { color: #999; }

.menubar {
  display: flex;
  align-items: center;
  gap: 16px;
  height: 25px;
  padding: 2px 8px 0;
  border-bottom: 1px solid #303030;
  color: #8c8c8c;
}

.toolbar {
  display: flex;
  align-items: center;
  height: 42px;
  padding: 0 3px;
}
.tool {
  width: 37px;
  height: 34px;
  flex: none;
  display: grid;
  place-items: center;
}
.tool.dim { opacity: .5; }
.tool.off { opacity: .22; }
.framed { border: 1px solid #252525; border-radius: 5px; }
.sep { width: 1px; height: 34px; margin: 0 7px 0 6px; background: #303030; }
.spacer { flex: 1; }

.field { display: flex; align-items: center; gap: 4px; color: #8c8c8c; }
.off-field { color: #606060; }
.toolbar .field { margin: 0 4px; }
.toolbar .sep + .field { margin-left: 3px; }
.spin {
  display: flex;
  width: 109px;
  height: 34px;
  padding-left: 6px;
  border: 1px solid #232323;
  border-radius: 5px;
  background: #303030;
}
.size { width: 105px; }
.spin input { flex: 1; }
.spin button {
  width: 17px;
  border-left: 1px solid #2b2b2b;
  font-size: 22px;
  line-height: 22px;
}

.select {
  display: grid;
  align-items: center;
  height: 34px;
  border: 1px solid #232323;
  border-radius: 5px;
}
.select > select, .select::after { grid-area: 1 / 1; }
.select > select { appearance: none; height: 32px; padding: 0 11px; }
.select::after {
  content: "";
  justify-self: end;
  width: 12px;
  height: 7px;
  margin-right: 11px;
  background: currentColor;
  clip-path: polygon(0 0, 100% 0, 50% 100%);
  pointer-events: none;
}
.unit { width: 60px; color: #8c8c8c; }
.wide { width: 235px; background: #383838; }
.wide::after { background: #eee; }

.toggles { display: flex; gap: 2px; }
.toggle {
  width: 35px;
  height: 34px;
  display: grid;
  place-items: center;
  border: 1px solid #1b2b40;
  border-radius: 5px;
  background: linear-gradient(#1f4a83, #29456b);
}

.workspace {
  flex: 1;
  min-height: 0;
  display: grid;
  grid-template-columns: 35px minmax(0, 1fr) 12px 441px;
  padding-right: 5px;
}

.toolbox { border-right: 2px solid #2b2b2b; overflow: hidden; }
.toolbox button { width: 32px; height: 32px; display: grid; place-items: center; }
.toolbox .active {
  width: 30px;
  height: 31px;
  margin: 1px 1px 0;
  border: 1px solid #1b2b40;
  border-radius: 4px;
  background: #24497c;
}
.toolbox hr { height: 1px; margin: 0; border: 0; background: #2d2d2d; }

.editor {
  position: relative;
  display: grid;
  grid-template-columns: 20px minmax(0, 1fr) 26px;
  grid-template-rows: 19px minmax(0, 1fr) 18px;
}
.corner {
  display: grid;
  place-items: center;
  min-height: 0;
  border: 1px solid #232323;
  border-radius: 4px;
}
.ruler { display: block; width: 100%; height: 100%; background: #333; }
.ruler text { fill: #ccc; font-size: 9px; }
.ruler-page { fill: #1c1f1e; }
.canvas { display: block; width: 100%; height: 100%; background: #d1d1d1; border-bottom: 1px solid #777; }
.page { fill: #fff; stroke: #666; filter: drop-shadow(3px 2px 2px #0004); }
.welcome { font: bold 35px "Noto Sans", sans-serif; }
.vscroll, .hscroll { display: flex; background: #2d2d2d; }
.vscroll { padding: 251px 9px 0 10px; }
.vscroll .thumb { width: 7px; height: 190px; border-radius: 4px; background: #5a5a58; }
.hscroll { padding: 5px 0 0 337px; }
.hscroll .thumb { width: 704px; height: 9px; border-radius: 5px; background: #5a5a58; }
.scroll-corner { background: #2d2d2d; }

.splitter { display: flex; flex-direction: column; align-items: center; justify-content: center; gap: 2px; padding-right: 2px; }
.splitter i { width: 3px; height: 3px; border-radius: 2px; background: #ddd; }

/* Import dialog, a window floating above the canvas */
.dialog {
  position: absolute;
  left: 36px;
  top: 21px;
  width: 652px;
  border: 2px solid #606060;
  background: #353535;
  box-shadow: 1px 5px 12px #0008;
}
.dialog-title {
  display: flex;
  align-items: center;
  gap: 4px;
  height: 28px;
  padding: 0 7px;
  background: #fff;
  color: #000;
}
.dialog-title h2 { flex: 1; }
.dialog-title button .icon { color: #000; }
.dialog-body { padding: 12px 11px 2px 12px; }
.options { display: flex; gap: 8px; }
.options legend { float: left; padding: 1px 0 0; width: 129px; white-space: nowrap; }
.choices { display: grid; grid-auto-rows: 21px; }
.choices label, .check { display: flex; align-items: center; gap: 4px; white-space: nowrap; }
.choices input, .check input {
  appearance: none;
  width: 16px;
  height: 16px;
  flex: none;
  border: 1px solid #141414;
  border-radius: 8px;
  background: #383838;
}
.choices input:checked { border: 4px solid #1b6fdc; background: #fff; }
.row { display: flex; justify-content: space-between; align-items: center; height: 38px; }
.options + .row { margin-top: 2px; }
.dialog .spin { width: 93px; }
.dialog .spin button { color: #eee; }
.check { height: 25px; padding-left: 4px; }
.check input { border-radius: 3px; }
.actions { display: flex; justify-content: flex-end; gap: 2px; margin: 8px -9px 0 0; }
.actions button {
  width: 101px;
  height: 34px;
  border: 1px solid #1e1e1e;
  border-radius: 5px;
  background: #373737;
}
.actions .focused { outline: 1px dashed #888; outline-offset: -4px; }
.marker {
  position: absolute;
  right: -11px;
  bottom: -14px;
  width: 120px;
  height: 65px;
  border: 8px solid #ff1400;
  pointer-events: none;
}

.panel { display: flex; flex-direction: column; padding: 5px 0 6px; }
.tabs { display: flex; height: 38px; padding-left: 9px; background: #2d2d2d; border-bottom: 1px solid #232323; }
.tab { width: 64px; display: grid; place-items: center; padding-bottom: 2px; }
.tab.current {
  width: 168px;
  display: flex;
  align-items: center;
  justify-content: center;
  gap: 2px;
  margin-right: 4px;
  padding: 0;
  border: 1px solid #232323;
  border-bottom: 4px solid #15539e;
  background: #353535;
  color: #8c8c8c;
}
.tab.more { width: 30px; margin-left: auto; border-radius: 4px; background: #303030; }
.tab.more .icon { color: #999; }
.panel-tools { display: flex; align-items: center; height: 38px; }
.panel-tools .sep { margin: 0 4px; }
.search {
  display: flex;
  align-items: center;
  width: 143px;
  height: 34px;
  margin-left: 4px;
  padding-left: 4px;
  border: 1px solid #232323;
  border-radius: 5px;
  background: #2d2d2d;
}
.search input { flex: 1; }
.tree {
  flex: 1;
  border: 1px solid #232323;
  background: #2f2f2f;
  list-style: none;
}
.tree li {
  display: flex;
  align-items: center;
  gap: 6px;
  height: 24px;
  padding-left: 32px;
  background: linear-gradient(#3b80ee, #3b80ee) right 1px center / 6px 22px no-repeat;
}
.tree .icon { color: #3b80ee; }
.tree .layer { padding-left: 5px; background-color: #224068; }
.twist { width: 8px; height: 5px; background: #888; clip-path: polygon(0 0, 100% 0, 50% 100%); }

.palette { display: flex; align-items: flex-end; height: 36px; padding-left: 1px; }
.none { width: 33px; height: 34px; margin-right: 1px; background: #fff; }
.none svg { display: block; }
.swatches { display: flex; flex: 1; gap: 1px; }
.swatches button { width: 16px; height: 17px; flex: none; }
.palette-nav { display: flex; }
.palette-nav button { width: 31px; height: 32px; display: grid; place-items: center; }
.palette-nav .burger {
  width: 21px;
  height: 28px;
  align-content: center;
  gap: 4px;
  border: 1px solid #232323;
  border-radius: 4px;
}
.burger i { width: 14px; height: 2px; background: #ddd; }

.status { display: flex; align-items: center; height: 34px; color: #8c8c8c; }
.status dl { display: grid; align-self: flex-start; grid-auto-rows: 19px; line-height: 19px; }
.paint { grid-template-columns: 44px 1fr; column-gap: 32px; width: 154px; }
.paint dt, .coords dd { text-align: right; }
.opacity .spin { width: 72px; }
.layer-name { margin-left: 20px; padding-left: 6px; border-left: 3px solid #3b80ee; }
.status .tool { margin-left: 1px; }
.status .layer-name + .tool { margin-left: 9px; }
.message { flex: 1; margin-left: 5px; white-space: nowrap; }
.coords { grid-template-columns: 16px 40px; padding-left: 10px; border-left: 1px solid #2d2d2d; }
.field.zoom, .field.turn { color: #bbb; gap: 2px; }
.status .field label { color: #8c8c8c; }
.zoom { margin-left: 8px; }
.zoom .spin { width: 87px; }
.zoom .spin button, .turn .spin button { width: 22px; color: #8c8c8c; }
.turn { margin: 0 11px; }
.turn .spin { width: 93px; padding-left: 12px; }
```
FILE: script.js
```js
// Default palette, one group per hue family
const palette = [
  "000000 1a1a1a 333333 4d4d4d 666666 808080 999999 b3b3b3 cccccc e6e6e6 ececec f2f2f2 f9f9f9 ffffff",
  "800000 ff0000 808000 ffff00 008000 00ff00 008080 00ffff 000080 0000ff 800080 ff00ff",
  "2b0000 550000 800000 aa0000 d40000 ff0000 ff2a2a ff5555 ff8080 ffaaaa ffd5d5",
  "280b0b 501616 782121 a02c2c c83737 d35f5f de8787 e9afaf f4d7d7",
  "241c1c 483737 6c5353 916f6f ac9393 c8b7b7 e3dbdb",
  "2b1100 552200 803300 aa4400 d45500 ff6600 ff7f2a ff9955 ffb380 ffccaa ffe6d5",
  "28170b 502d16 784421 a05a2c c87137 d38d5f deaa87 e9c6af f4e3d7",
  "241f1c 483e37 6c5d53 917c6f ac9d93 c8beb7 e3dedb",
  "2b2200 554400 806600 aa8800 d4aa00 ffcc00 ffd42a ffdd55 ffe680 ffeeaa fff6d5",
  "28220b 504416 786721 a0892c c8ab37 d3bc5f decd87 e9ddaf f4eed7",
  "24221c 484537 6c6753 918a6f aca793 c8c4b7"
].join(" ").split(" ");

const swatches = document.getElementById("swatches");
for (const hex of palette) {
  const button = document.createElement("button");
  button.style.background = "#" + hex;
  button.setAttribute("aria-label", "#" + hex);
  swatches.append(button);
}
```
